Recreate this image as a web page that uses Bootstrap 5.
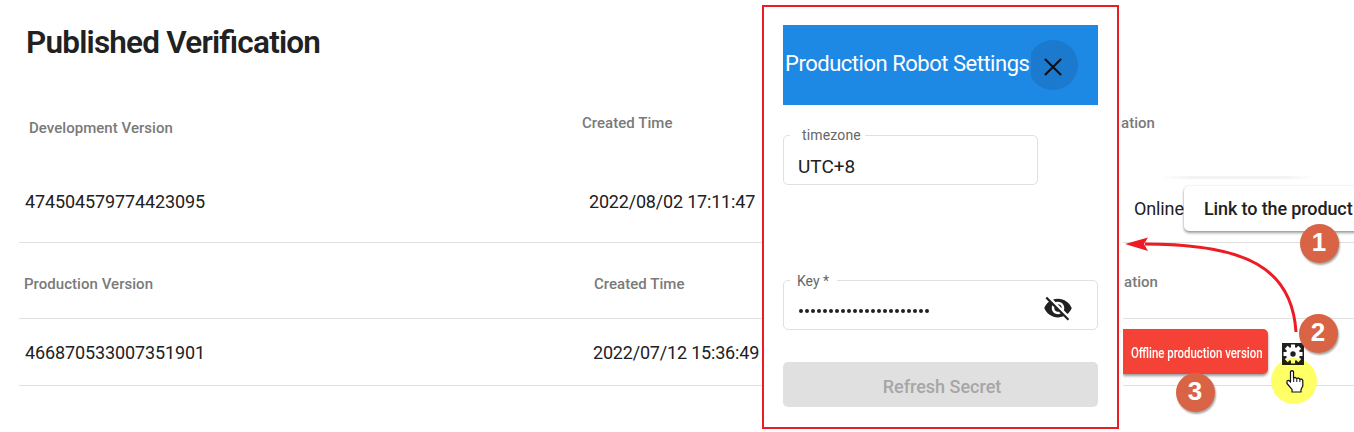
<!DOCTYPE html>
<html lang="en">
<head>
<meta charset="utf-8">
<title>Published Verification</title>
<link href="https://cdn.jsdelivr.net/npm/bootstrap@5.3.0/dist/css/bootstrap.min.css" rel="stylesheet">
<style>
body{font-family:Roboto,sans-serif;color:#212121;background:#fff;overflow:hidden}
.stage{width:1354px;height:432px}
.page-title{font-size:31.5px;line-height:40px;font-weight:600;padding:23px 0 0 26px;height:95px;letter-spacing:-.79px;font-feature-settings:"liga" 1}
.ver-row{display:grid;grid-template-columns:563px 541px 1fr;margin-left:19px;line-height:20px;white-space:nowrap}
.ver-row.ruled{border-bottom:1px solid #e0e0e0}
.head-dev{height:66px}.body-dev{height:82px}.head-prod{height:76px}.body-prod{height:67px}
.label-txt{font-size:15px;font-weight:500;color:#7a7a7a;letter-spacing:.04px}
.val-txt{font-size:18px;letter-spacing:-.12px}
.date-txt{letter-spacing:-.19px}
.over{position:relative;z-index:3}
.link-btn{width:176px;height:45px;background:#fff;border-radius:5px 0 0 5px;box-shadow:0 2px 3px rgba(0,0,0,.38),0 0 2px rgba(0,0,0,.12);font-size:18px;font-weight:500;padding-left:20px;line-height:45px}
.off-btn{width:145px;height:45px;background:#f44336;color:#fff;border-radius:0 5px 5px 0;box-shadow:0 2px 3px rgba(0,0,0,.4);font-size:14.5px;font-weight:500;line-height:49px;padding-left:8px;letter-spacing:0}
.off-btn span{display:inline-block;transform:scaleX(.787);transform-origin:0 50%}
.dialog-box{left:762px;top:5px;width:357px;height:424px;border:2px solid #ed1c24;background:#fff;padding:18px 19px;box-shadow:4px 0 0 #fff;z-index:2}
.dlg-head{height:80px;background:#1e88e5;color:#fff;font-size:22px;padding-left:2px;white-space:nowrap;letter-spacing:-.48px}
.dlg-title{width:243px;margin-top:-3px;z-index:1}
.dlg-title span{display:inline-block;background:#1e88e5;padding-right:2px}
.close-disc{width:50px;height:50px;border-radius:50%;background:#1b7acd}
.field{position:relative;height:50px;border:1px solid #e0e0e0;border-radius:5px;padding-left:14px}
.field-label{position:absolute;top:-11px;background:#fff;font-size:14px;line-height:20px;color:#666;white-space:nowrap}
.dots i{width:4.4px;height:4.4px;border-radius:50%;background:#212121}
.dots{gap:1.6px}
.refresh{height:45px;border-radius:5px;background:#e0e0e0;color:#a6a6a6;font-size:18px;font-weight:500;line-height:49px;padding-left:3px}
.num{width:39px;height:39px;border-radius:50%;background:#d96445;color:#fff;font:700 26px/37px "Liberation Sans",sans-serif;text-align:center;box-shadow:1px 2px 2px rgba(0,0,0,.35);z-index:6}
.ghost{left:1160px;top:176px;width:155px;height:3px;background:linear-gradient(90deg,#fff,#f3f3f3 20%,#f3f3f3 80%,#fff)}
.overlay{left:0;top:0;z-index:5}
</style>
</head>
<body>
<main class="stage position-relative overflow-hidden">
<h1 class="page-title m-0">Published Verification</h1>
<section class="ver-row head-dev label-txt">
<div style="padding:23px 0 0 10px">Development Version</div>
<div style="padding-top:18px">Created Time</div>
<div style="padding-top:18px"><span class="over" style="margin-left:-2px">ation</span></div>
</section>
<section class="ver-row body-dev ruled val-txt">
<div style="padding:31px 0 0 6px">474504579774423095</div>
<div class="date-txt" style="padding:31px 0 0 7px">2022/08/02 17:11:47</div>
<div class="d-flex" style="padding:25px 0 0 11px"><span style="padding-top:13px;width:50px">Online</span><div class="link-btn flex-shrink-0">Link to the product</div></div>
</section>
<section class="ver-row head-prod ruled label-txt">
<div style="padding:31px 0 0 5px">Production Version</div>
<div style="padding:31px 0 0 12px">Created Time</div>
<div style="padding:29px 0 0 1px">ation</div>
</section>
<section class="ver-row body-prod ruled val-txt">
<div style="padding:24px 0 0 6px">466870533007351901</div>
<div class="date-txt" style="padding:24px 0 0 11px">2022/07/12 15:36:49</div>
<div class="d-flex" style="padding-top:10px"><div class="off-btn"><span>Offline production version</span></div></div>
</section>
<div class="ghost position-absolute"></div>
<aside class="dialog-box position-absolute">
<header class="dlg-head d-flex align-items-center"><div class="dlg-title flex-shrink-0"><span>Production Robot Settings</span></div>
<div class="close-disc d-flex align-items-center justify-content-center"><svg class="mt-1" width="18" height="18" viewBox="0 0 20 20"><path d="M1 1 19 19M19 1 1 19" stroke="#0b0f14" stroke-width="2.3"/></svg></div></header>
<div class="field" style="width:255px;margin-top:30px"><div class="field-label" style="left:6px;padding:0 4px 0 12px;letter-spacing:.15px">timezone</div><div style="font-size:19px;line-height:61px">UTC+8</div></div>
<div class="field d-flex align-items-center" style="margin-top:95px"><div class="field-label" style="left:6px;top:-10px;padding:0 8px 0 7px">Key *</div><div class="dots d-flex pt-2 mt-1" style="width:245px;padding-left:1px"><i></i><i></i><i></i><i></i><i></i><i></i><i></i><i></i><i></i><i></i><i></i><i></i><i></i><i></i><i></i><i></i><i></i><i></i><i></i><i></i><i></i><i></i></div>
<svg style="margin-top:6px" width="30" height="30" viewBox="0 0 24 24" fill="#212121"><path d="M12 7c2.76 0 5 2.24 5 5 0 .65-.13 1.26-.36 1.83l2.92 2.92c1.51-1.26 2.7-2.89 3.43-4.75-1.73-4.39-6-7.5-11-7.5-1.4 0-2.74.25-3.98.7l2.16 2.16C10.74 7.13 11.35 7 12 7zM2 4.27l2.28 2.28.46.46C3.08 8.3 1.78 10.02 1 12c1.73 4.39 6 7.5 11 7.5 1.55 0 3.03-.3 4.38-.84l.42.42L19.73 22 21 20.73 3.27 3 2 4.27zM7.53 9.8l1.55 1.55c-.05.21-.08.43-.08.65 0 1.66 1.34 3 3 3 .22 0 .44-.03.65-.08l1.55 1.55c-.67.33-1.41.53-2.2.53-2.76 0-5-2.24-5-5 0-.79.2-1.53.53-2.2zm4.31-.78 3.15 3.15.02-.16c0-1.66-1.34-3-3-3l-.17.01z"/></svg></div>
<div class="refresh text-center" style="margin-top:32px">Refresh Secret</div>
</aside>
<svg class="overlay position-absolute" width="1354" height="432" viewBox="0 0 1354 432">
<path d="M1296 332C1292 268 1246 244 1145 244" fill="none" stroke="#ed1c24" stroke-width="3"/>
<path d="M1125 244 1148 237.5 1144 244 1148 251Z" fill="#ed1c24"/>
<rect x="1282" y="343" width="22" height="22" fill="#212121"/>
<g transform="translate(1293 354)" fill="#fff"><circle r="7"/><path d="M-2-9.5H2V9.5H-2Z"/><path d="M-2-9.5H2V9.5H-2Z" transform="rotate(45)"/><path d="M-2-9.5H2V9.5H-2Z" transform="rotate(90)"/><path d="M-2-9.5H2V9.5H-2Z" transform="rotate(135)"/><circle r="2.7" fill="#212121"/></g>
<circle cx="1294" cy="381" r="23" fill="#ffff66" style="mix-blend-mode:multiply"/>
<g transform="translate(1286 370)"><path d="M4.5 1.5q1.5-1.5 3 0v6.5l1.7-.6 1.7 1 1.7-.4 1.5 1.2 1.7-.2 1 1.4v5.500l-1.800 3.500v2.600h-9v-2.600L1 13.500v-2.500l1.500-.7 2 1.700Z" fill="#fff" stroke="#111" stroke-width="1.2" stroke-linejoin="round"/><path d="M7.7 8v4M10.8 8.500v3.500M13.900 9v3" stroke="#111"/></g>
</svg>
<div class="num position-absolute" style="left:1299.5px;top:223.5px">1</div>
<div class="num position-absolute" style="left:1298.5px;top:313.5px">2</div>
<div class="num position-absolute" style="left:1175.5px;top:372.5px">3</div>
</main>
</body>
</html>
